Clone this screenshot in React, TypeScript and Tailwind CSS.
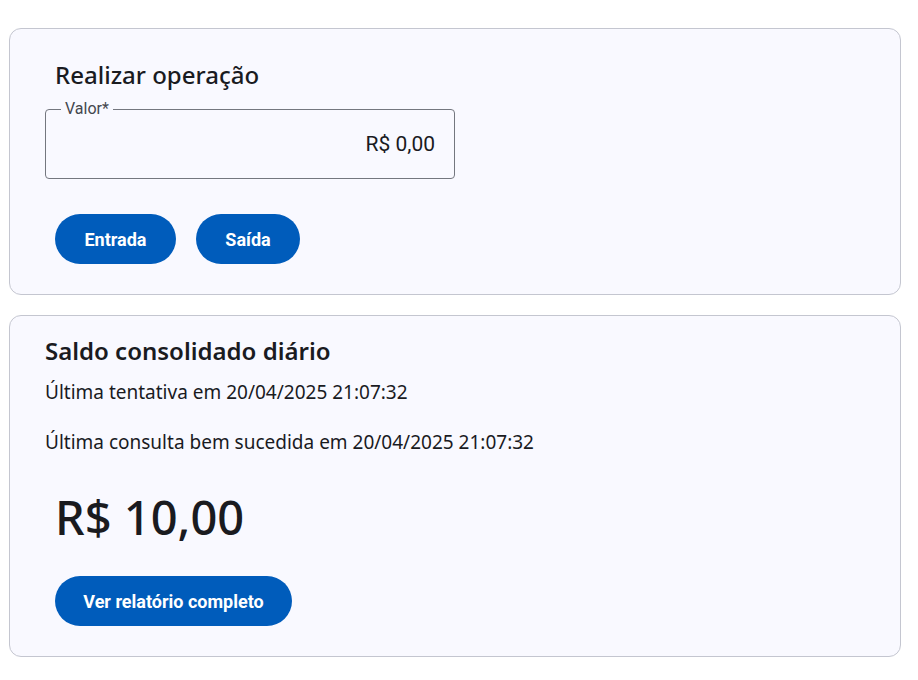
export default function App() {
  return (
    <div className="min-h-[680px] bg-white px-[9px] pt-[28px] pr-[17px] font-['Noto_Sans',sans-serif] text-[#1a1b1f]">
      <div className="flex flex-col gap-5">
        <section className="rounded-xl border border-[#c4c6d0] bg-[#f9f9ff] px-[35px] pt-[29px] pb-[30px]">
          <h2 className="pl-[10px] text-[24px] font-medium leading-[34px]">Realizar operação</h2>
          <fieldset className="mt-[10px] h-[77px] w-[410px] rounded-[4px] border border-[#74777f] px-[14px] pb-[10px]">
            <legend className="px-[4px] ml-[1px] font-['Roboto',sans-serif] text-[16px] leading-[14px] text-[#44474e]">Valor*</legend>
            <div className="flex h-[50px] items-center justify-end pr-[5px] pt-[7px] font-['Roboto',sans-serif] text-[21px]">R$ 0,00</div>
          </fieldset>
          <div className="mt-[35px] flex gap-5 pl-[10px]">
            <button className="h-[50px] w-[121px] rounded-full bg-[#005cbb] font-['Roboto',sans-serif] text-[18px] font-bold text-white">Entrada</button>
            <button className="h-[50px] w-[104px] rounded-full bg-[#005cbb] font-['Roboto',sans-serif] text-[18px] font-bold text-white">Saída</button>
          </div>
        </section>

        <section className="rounded-xl border border-[#c4c6d0] bg-[#f9f9ff] px-[35px] pt-[18px] pb-[30px]">
          <h2 className="text-[24px] font-semibold leading-[34px]">Saldo consolidado diário</h2>
          <p className="mt-[10px] text-[19px] leading-[28px]">Última tentativa em 20/04/2025 21:07:32</p>
          <p className="mt-[22px] text-[19px] leading-[28px]">Última consulta bem sucedida em 20/04/2025 21:07:32</p>
          <div className="mt-[29px] pl-[10px] text-[47px] font-medium leading-[64px]">R$ 10,00</div>
          <div className="mt-[27px] pl-[10px]">
            <button className="h-[50px] w-[237px] rounded-full bg-[#005cbb] font-['Roboto',sans-serif] text-[18px] font-bold text-white">Ver relatório completo</button>
          </div>
        </section>
      </div>
    </div>
  );
}
